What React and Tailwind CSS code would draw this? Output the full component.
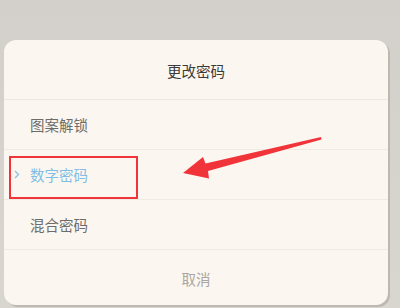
export default function App() {
  const font = { fontFamily: '"Noto Sans CJK SC", "Noto Sans", sans-serif' };

  return (
    <div
      className="relative w-[400px] h-[308px] overflow-hidden bg-gradient-to-b from-[#d3cfca] to-[#d9d5cf]"
      style={font}
    >
      <div className="pt-[40px] pl-[4px] pr-[12px]">
        <div className="h-[265px] rounded-[12px] bg-[#fbf7f0] flex flex-col shadow-[2px_2px_0_#bdb8b1]">
          <div className="h-[60px] flex items-center justify-center border-b border-[#ece7df] pt-[2px]">
            <span className="text-[14.5px] text-[#3a3a3a]">更改密码</span>
          </div>
          <div className="h-[50px] flex items-center pl-[26px] border-b border-[#efeae2]">
            <span className="text-[14.5px] text-[#6e6c69]">图案解锁</span>
          </div>
          <div className="h-[50px] flex items-center pl-[10px] border-b border-[#efeae2]">
            <svg width="6" height="9" viewBox="0 0 6 9" className="mr-[10px]">
              <polyline points="1,1 4.5,4.5 1,8" fill="none" stroke="#8fc2e4" strokeWidth="1.4" />
            </svg>
            <span className="text-[14.5px] text-[#82bde6]">数字密码</span>
          </div>
          <div className="h-[50px] flex items-center pl-[26px] border-b border-[#efeae2]">
            <span className="text-[14.5px] text-[#6e6c69]">混合密码</span>
          </div>
          <div className="flex-1 flex items-center justify-center pt-[2px]">
            <span className="text-[14.5px] text-[#a9a6a2]">取消</span>
          </div>
        </div>
      </div>

      {/* annotation: red box */}
      <div className="absolute left-[9px] top-[156px] w-[129px] h-[43px] border-[2px] border-[#f0343a]" />

      {/* annotation: arrow */}
      <svg className="absolute left-0 top-0" width="400" height="308" viewBox="0 0 400 308">
        <polygon
          points="183,173 203,157 205.5,163.5 321,137 321.5,139.5 208,171 209,178.5"
          fill="#f0343a"
        />
      </svg>
    </div>
  );
}
